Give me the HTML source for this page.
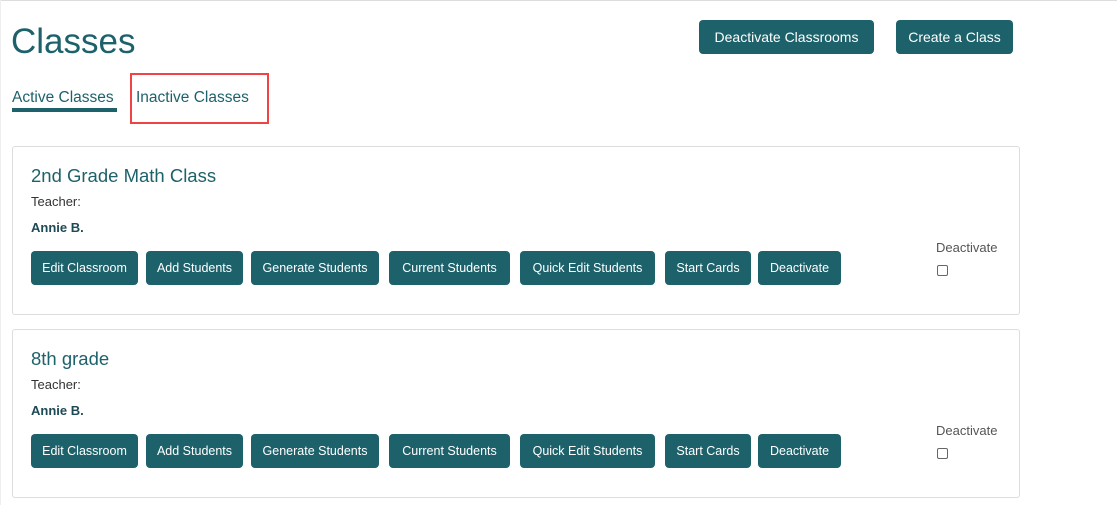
<!DOCTYPE html>
<html><head><style>
body{margin:0;width:1117px;height:505px;background:#fff;font-family:"Liberation Sans",sans-serif;position:relative;overflow:hidden;color:#1d626b}
.top{position:absolute;left:0;top:0;width:1117px;height:1px;background:#ddd}
.lft{position:absolute;left:0;top:0;width:1px;height:505px;background:#eee}
.a{position:absolute;white-space:nowrap}
.btn{position:absolute;background:#1d626b;color:#fff;border-radius:4px;font-size:12.5px;display:flex;align-items:center;justify-content:center;height:34px}
.card{position:absolute;left:12px;width:1006px;height:167px;border:1px solid #ddd;border-radius:3px}
.card .t{position:absolute;left:18px;top:18px;font-size:18.5px}
.card .te{position:absolute;left:18px;top:47px;font-size:13px;color:#333}
.card .n{position:absolute;left:18px;top:73px;font-size:13px;font-weight:bold;color:#1d4a55}
.card .btn{top:104px}
.card .d{position:absolute;left:923px;top:93px;font-size:13px;color:#555}
.card .cb{position:absolute;left:924px;top:118px;width:9px;height:9px;border:1px solid #666;border-radius:2px}
</style></head><body>
<div class="top"></div><div class="lft"></div>
<div class="a" style="left:11px;top:22px;font-size:35px">Classes</div>
<div class="btn" style="left:699px;top:20px;width:175px;font-size:14px">Deactivate Classrooms</div>
<div class="btn" style="left:896px;top:20px;width:117px;font-size:14px">Create a Class</div>
<div class="a" style="left:12px;top:89px;font-size:15.5px">Active Classes</div>
<div class="a" style="left:12px;top:108px;width:105px;height:4px;background:#1d626b"></div>
<div class="a" style="left:136px;top:89px;font-size:15.5px">Inactive Classes</div>
<div class="a" style="left:130px;top:73px;width:135px;height:47px;border:2px solid #f04444"></div>

<div class="card" style="top:146px">
<div class="t">2nd Grade Math Class</div><div class="te">Teacher:</div><div class="n">Annie B.</div>
<div class="btn" style="left:18px;width:107px">Edit Classroom</div>
<div class="btn" style="left:133px;width:97px">Add Students</div>
<div class="btn" style="left:238px;width:128px">Generate Students</div>
<div class="btn" style="left:376px;width:121px">Current Students</div>
<div class="btn" style="left:507px;width:135px">Quick Edit Students</div>
<div class="btn" style="left:652px;width:86px">Start Cards</div>
<div class="btn" style="left:745px;width:83px">Deactivate</div>
<div class="d">Deactivate</div><div class="cb"></div>
</div>
<div class="card" style="top:329px">
<div class="t">8th grade</div><div class="te">Teacher:</div><div class="n">Annie B.</div>
<div class="btn" style="left:18px;width:107px">Edit Classroom</div>
<div class="btn" style="left:133px;width:97px">Add Students</div>
<div class="btn" style="left:238px;width:128px">Generate Students</div>
<div class="btn" style="left:376px;width:121px">Current Students</div>
<div class="btn" style="left:507px;width:135px">Quick Edit Students</div>
<div class="btn" style="left:652px;width:86px">Start Cards</div>
<div class="btn" style="left:745px;width:83px">Deactivate</div>
<div class="d">Deactivate</div><div class="cb"></div>
</div>
</body></html>
